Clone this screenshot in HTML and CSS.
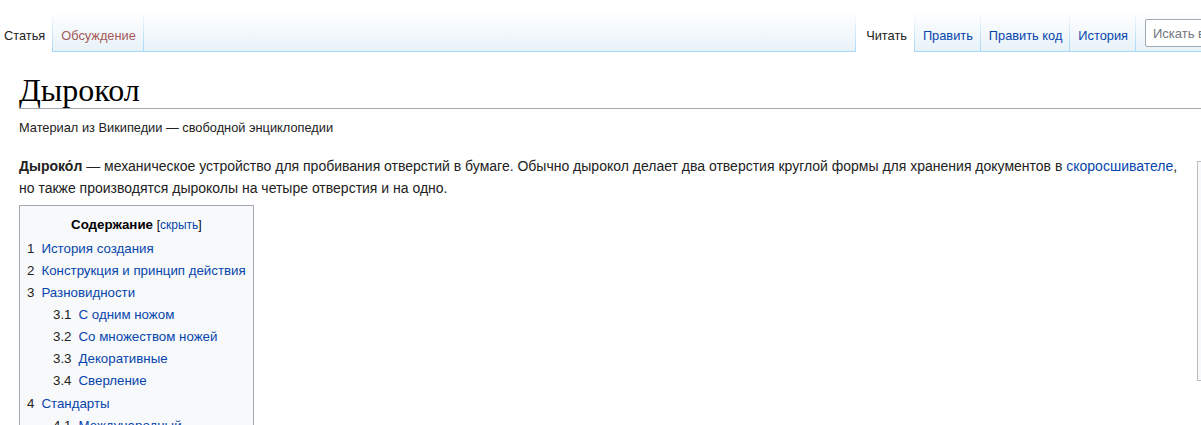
FILE: index.html
```html
<!DOCTYPE html>
<html lang="ru">
<head>
  <meta charset="UTF-8">
  <title>Дырокол — Википедия</title>
  <link rel="stylesheet" href="styles.css">
</head>
<body>
  <div class="page">
    <div class="header">
      <div class="tabs tabs-left">
        <a class="tab tab-selected">Статья</a>
        <a class="tab tab-new">Обсуждение</a>
      </div>
      <div class="header-right">
        <div class="tabs tabs-right">
          <a class="tab tab-selected">Читать</a>
          <a class="tab">Править</a>
          <a class="tab">Править код</a>
          <a class="tab">История</a>
        </div>
        <input class="search" type="search" placeholder="Искать в Википедии">
      </div>
    </div>

    <div class="content">
      <h1 class="first-heading">Дырокол</h1>
      <div class="site-sub">Материал из Википедии — свободной энциклопедии</div>

      <div class="article">
        <div class="infobox"></div>
        <p><b>Дыроко́л</b> — механическое устройство для пробивания отверстий в бумаге. Обычно дырокол делает два отверстия круглой формы для хранения документов в <a>скоросшивателе</a>, но также производятся дыроколы на четыре отверстия и на одно.</p>

        <div class="toc">
          <div class="toc-title"><b>Содержание</b> <span class="toc-toggle">[<a>скрыть</a>]</span></div>
          <ul>
            <li><span class="toc-num">1</span><a>История создания</a></li>
            <li><span class="toc-num">2</span><a>Конструкция и принцип действия</a></li>
            <li><span class="toc-num">3</span><a>Разновидности</a>
              <ul>
                <li><span class="toc-num">3.1</span><a>С одним ножом</a></li>
                <li><span class="toc-num">3.2</span><a>Со множеством ножей</a></li>
                <li><span class="toc-num">3.3</span><a>Декоративные</a></li>
                <li><span class="toc-num">3.4</span><a>Сверление</a></li>
              </ul>
            </li>
            <li><span class="toc-num">4</span><a>Стандарты</a>
              <ul>
                <li><span class="toc-num">4.1</span><a>Международный</a></li>
                <li><span class="toc-num">4.2</span><a>Американский</a></li>
              </ul>
            </li>
          </ul>
        </div>
      </div>
    </div>
  </div>
</body>
</html>
```

FILE: styles.css
```css
html,
body {
  overflow: hidden;
}

body {
  margin: 0;
  padding: 0;
  background-color: #fff;
  font-family: 'Liberation Sans', Arial, sans-serif;
  color: #222;
}

a {
  color: #0645ad;
  text-decoration: none;
  cursor: pointer;
}

.page {
  width: 1400px;
}

/* tabs bar */

.header {
  display: flex;
  height: 40px;
  margin-top: 11px;
  background: linear-gradient(to bottom, #fff 0%, #e8f2f8 100%);
  border-bottom: 1px solid #a7d7f9;
}

.tabs {
  display: flex;
}

.tabs-left {
  margin-left: -4px;
}

.header-right {
  display: flex;
  margin-left: auto;
}

.tab {
  display: block;
  height: 40px;
  box-sizing: border-box;
  padding: 17px 8px 0 8px;
  font-size: 12.8px;
  line-height: 15px;
  color: #0645ad;
  white-space: nowrap;
  background-image:
    linear-gradient(to bottom, rgba(167, 215, 249, 0) 0%, #a7d7f9 100%),
    linear-gradient(to bottom, #fff 0%, #e8f2f8 100%);
  background-size: 1px 100%, 100% 100%;
  background-position: right bottom, 0 0;
  background-repeat: no-repeat;
}

.tabs-right .tab:first-child {
  padding-left: 11px;
  background-image:
    linear-gradient(to bottom, rgba(167, 215, 249, 0) 0%, #a7d7f9 100%),
    linear-gradient(to bottom, rgba(167, 215, 249, 0) 0%, #a7d7f9 100%),
    linear-gradient(to bottom, #fff 0%, #e8f2f8 100%);
  background-size: 1px 100%, 1px 100%, 100% 100%;
  background-position: right bottom, left bottom, 0 0;
}

.tab-selected {
  height: 41px;
  margin-bottom: -1px;
  color: #222;
  background-image:
    linear-gradient(to bottom, rgba(167, 215, 249, 0) 0%, #a7d7f9 100%),
    linear-gradient(#fff, #fff);
}

.tabs-right .tab-selected:first-child {
  background-image:
    linear-gradient(to bottom, rgba(167, 215, 249, 0) 0%, #a7d7f9 100%),
    linear-gradient(to bottom, rgba(167, 215, 249, 0) 0%, #a7d7f9 100%),
    linear-gradient(#fff, #fff);
}

.tab-new {
  color: #a55858;
}

.search {
  width: 240px;
  height: 28px;
  box-sizing: border-box;
  margin: 8px 15px 0 9px;
  padding: 0 7px;
  border: 1px solid #a2a9b1;
  border-radius: 2px;
  background-color: #fff;
  font-family: 'Liberation Sans', Arial, sans-serif;
  font-size: 13px;
  color: #222;
  outline: none;
}

.search::placeholder {
  color: #72777d;
}

/* content */

.content {
  padding: 21px 18px 0 19px;
}

.first-heading {
  margin: 0;
  font-family: 'Liberation Serif', 'Times New Roman', serif;
  font-size: 32px;
  font-weight: normal;
  line-height: 35px;
  color: #000;
  border-bottom: 1px solid #a2a9b1;
}

.site-sub {
  margin-top: 9px;
  font-size: 12.8px;
  line-height: 1.6;
  color: #222;
}

.article {
  margin-top: 17px;
  font-size: 14px;
  line-height: 22px;
}

.article p {
  margin: 0 0 6px 0;
}

.infobox {
  float: right;
  width: 185px;
  height: 220px;
  box-sizing: border-box;
  margin: 6px 0 14px 14px;
  border: 1px solid #b9bdc2;
  background-color: #f8f9fa;
}

/* table of contents */

.toc {
  display: inline-block;
  padding: 8px 7px 7px 7px;
  border: 1px solid #a2a9b1;
  background-color: #f8f9fa;
  font-size: 13.3px;
}

.toc-title {
  text-align: center;
  line-height: 22px;
  color: #000;
}

.toc-toggle {
  font-size: 12px;
}

.toc ul {
  margin: 2px 0 0 0;
  padding: 0;
  list-style: none;
}

.toc ul ul {
  margin: 0 0 1px 26px;
}

.toc li {
  line-height: 22px;
}

.toc-num {
  padding-right: 7px;
  color: #222;
}
```
